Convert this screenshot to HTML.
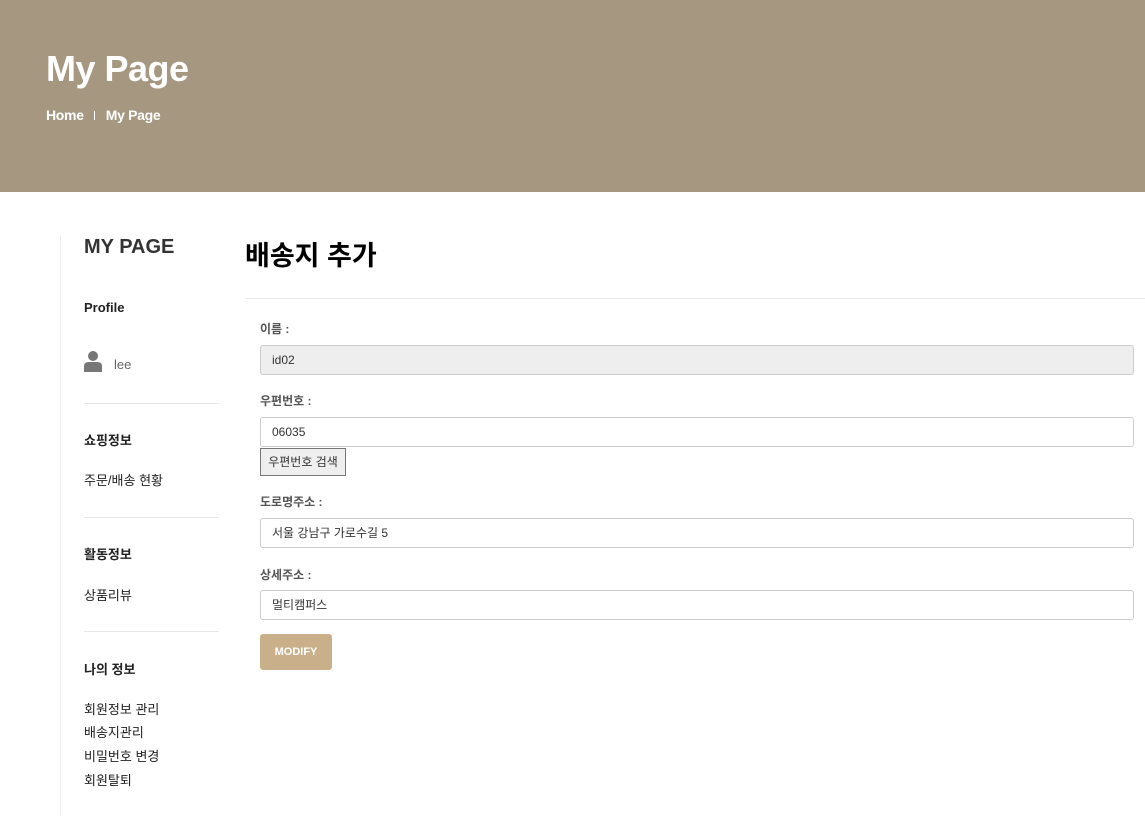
<!DOCTYPE html>
<html><head><meta charset="utf-8"><style>
*{box-sizing:border-box;margin:0;padding:0}
body{width:1145px;height:831px;overflow:hidden;background:#fff;font-family:"Liberation Sans","Noto Sans CJK KR",sans-serif;color:#222;position:relative}
.hero{position:absolute;left:0;top:0;width:1145px;height:192px;background:#a69781}
.hero h1{position:absolute;left:46px;top:48px;font-size:36px;color:#fff;font-weight:bold;letter-spacing:-0.5px}
.crumb{position:absolute;left:46px;top:107px;font-size:14px;color:#fff;font-weight:bold;letter-spacing:-0.3px}
.crumb span{display:inline-block;width:1px;height:9px;background:#fff;margin:0 11px 0 10px;vertical-align:0}
.vline{position:absolute;left:60px;top:236px;width:1px;height:580px;background:#eee}
.t{position:absolute;white-space:nowrap}
.side{font-size:13px;color:#222}
.bold{font-weight:bold}
.hr{position:absolute;left:84px;width:135px;height:1px;background:#e6e6e6}
.lbl{position:absolute;left:260px;font-size:12px;font-weight:bold;color:#555}
.inp{position:absolute;left:260px;width:874px;height:30px;border:1px solid #ccc;border-radius:3px;font-size:12px;padding:0 11px;line-height:28px;color:#333}
</style></head><body>
<div class="hero"><h1>My Page</h1><div class="crumb">Home<span></span>My Page</div></div>
<div class="vline"></div>
<div class="t bold" style="left:84px;top:236px;font-size:20px;color:#333">MY PAGE</div>
<div class="t side bold" style="left:84px;top:300px">Profile</div>
<svg class="t" style="left:84px;top:350px" width="18" height="22" viewBox="0 0 18 22"><circle cx="9" cy="6" r="5" fill="#777"/><path d="M0 22V16Q0 12 5 12H13Q18 12 18 16V22Z" fill="#777"/></svg>
<div class="t side" style="left:114px;top:357px;color:#666">lee</div>
<div class="hr" style="top:403px"></div>
<div class="t side bold" style="left:84px;top:430px">쇼핑정보</div>
<div class="t side" style="left:84px;top:470px">주문/배송 현황</div>
<div class="hr" style="top:517px"></div>
<div class="t side bold" style="left:84px;top:544px">활동정보</div>
<div class="t side" style="left:84px;top:585px">상품리뷰</div>
<div class="hr" style="top:631px"></div>
<div class="t side bold" style="left:84px;top:659px">나의 정보</div>
<div class="t side" style="left:84px;top:699px">회원정보 관리</div>
<div class="t side" style="left:84px;top:722px">배송지관리</div>
<div class="t side" style="left:84px;top:746px">비밀번호 변경</div>
<div class="t side" style="left:84px;top:770px">회원탈퇴</div>
<div class="t bold" style="left:245px;top:234px;font-size:27px;color:#000">배송지 추가</div>
<div style="position:absolute;left:245px;top:298px;width:900px;height:1px;background:#e8e8e8"></div>
<div class="lbl" style="top:320px">이름 :</div>
<div class="inp" style="top:345px;background:#eee">id02</div>
<div class="lbl" style="top:392px">우편번호 :</div>
<div class="inp" style="top:417px">06035</div>
<div class="t" style="left:260px;top:448px;width:86px;height:28px;border:1px solid #777;background:#efefef;font-size:12px;line-height:26px;text-align:center;color:#333">우편번호 검색</div>
<div class="lbl" style="top:493px">도로명주소 :</div>
<div class="inp" style="top:518px">서울 강남구 가로수길 5</div>
<div class="lbl" style="top:566px">상세주소 :</div>
<div class="inp" style="top:590px">멀티캠퍼스</div>
<div class="t bold" style="left:260px;top:634px;width:72px;height:36px;background:#c9b08a;border-radius:3px;color:#fff;font-size:11px;line-height:36px;text-align:center">MODIFY</div>
</body></html>
